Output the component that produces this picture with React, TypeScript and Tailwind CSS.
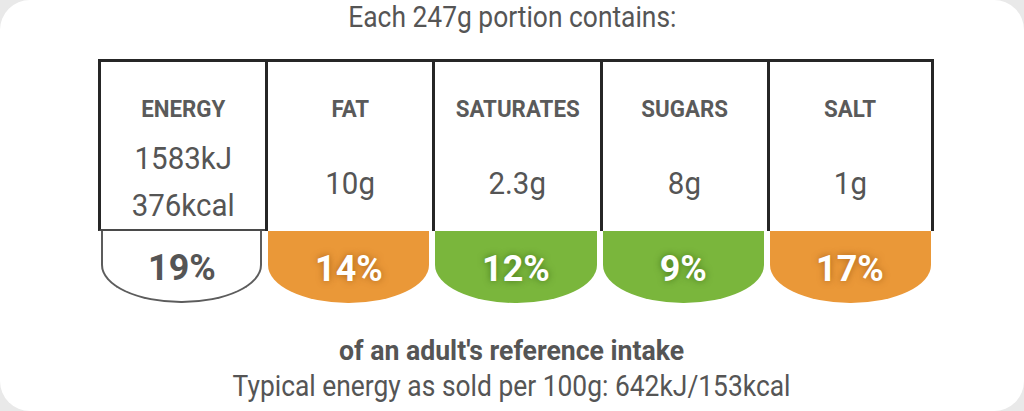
import React from 'react';

type Tone = 'plain' | 'amber' | 'green';

interface Nutrient {
  label: string;
  value: string[];
  pct: string;
  tone: Tone;
}

const nutrients: Nutrient[] = [
  { label: 'ENERGY', value: ['1583kJ', '376kcal'], pct: '19%', tone: 'plain' },
  { label: 'FAT', value: ['10g'], pct: '14%', tone: 'amber' },
  { label: 'SATURATES', value: ['2.3g'], pct: '12%', tone: 'green' },
  { label: 'SUGARS', value: ['8g'], pct: '9%', tone: 'green' },
  { label: 'SALT', value: ['1g'], pct: '17%', tone: 'amber' },
];

const pillTone: Record<Tone, string> = {
  plain: 'bg-white border-2 border-t-0 border-[#5c5c5c] text-[#555]',
  amber: 'bg-[#ea9838] text-white [text-shadow:0_0_8px_rgba(120,60,0,0.55)]',
  green: 'bg-[#7ab63c] text-white [text-shadow:0_0_8px_rgba(30,70,0,0.55)]',
};

// Roboto is wider than the condensed face in the label, so squeeze it a bit
function Cond({ children, className = 'scale-x-[0.91]' }: { children: React.ReactNode; className?: string }) {
  return <span className={`inline-block whitespace-nowrap ${className}`}>{children}</span>;
}

function Column({ item, index }: { item: Nutrient; index: number }) {
  const last = index === nutrients.length - 1;
  return (
    <div className="flex flex-col">
      <div
        className={`flex h-[172px] flex-col border-t-[3px] border-l-[3px] border-[#262626] ${
          last ? 'border-r-[3px]' : ''
        } ${item.tone === 'plain' ? 'border-b-[2px] border-b-[#4a4a4a]' : ''}`}
      >
        <div className="mt-[32px] flex h-[30px] items-center justify-center text-[24px] font-bold leading-[30px] text-[#5a5a5a]">
          <Cond className="scale-x-[0.93]">{item.label}</Cond>
        </div>
        <div className="flex flex-1 flex-col items-center justify-center pt-[11px] text-[31px] leading-[47px] text-[#555]">
          {item.value.map((v) => (
            <Cond key={v} className="scale-x-[0.95]">
              {v}
            </Cond>
          ))}
        </div>
      </div>
      <div className="px-[3px]">
        <div
          className={`flex h-[72px] items-center justify-center rounded-b-[80px_38px] pt-[4px] text-[37px] font-bold ${pillTone[item.tone]}`}
        >
          <Cond className="scale-x-[0.97]">{item.pct}</Cond>
        </div>
      </div>
    </div>
  );
}

export default function App() {
  return (
    <div className="h-[411px] w-full overflow-hidden bg-[#e9e9e9] font-['Roboto','Liberation_Sans',sans-serif]">
      <div className="flex h-full w-full flex-col items-center rounded-[30px] bg-white text-[#555]">
        <div className="flex h-[35px] items-center text-[29px] leading-none">
          <Cond>Each 247g portion contains:</Cond>
        </div>

        <div className="mt-[24px] ml-[8px] grid w-[836px] grid-cols-5">
          {nutrients.map((n, i) => (
            <Column key={n.label} item={n} index={i} />
          ))}
        </div>

        <div className="mt-[31px] flex flex-col items-center text-[#555]">
          <div className="h-[34px] text-[28px] font-bold leading-[34px]">
            <Cond className="scale-x-[0.95]">of an adult's reference intake</Cond>
          </div>
          <div className="h-[36px] text-[29px] leading-[36px]">
            <Cond>Typical energy as sold per 100g: 642kJ/153kcal</Cond>
          </div>
        </div>
      </div>
    </div>
  );
}
